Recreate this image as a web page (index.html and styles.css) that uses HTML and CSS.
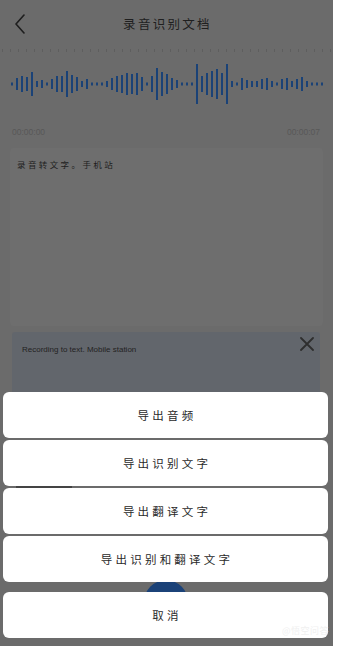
FILE: index.html
```html
<!DOCTYPE html>
<html lang="zh">
<head>
<meta charset="utf-8">
<title>录音识别文档</title>
<link rel="stylesheet" href="styles.css">
</head>
<body>
<div class="screen">
  <header class="topbar">
    <span class="back">
      <svg width="12" height="20" viewBox="0 0 12 20"><path d="M10 1 L2 10 L10 19" fill="none" stroke="#1e1e1e" stroke-width="1.6" stroke-linecap="round" stroke-linejoin="round"/></svg>
    </span>
    <h1 class="title">录音识别文档</h1>
    <span></span>
  </header>
  <div class="ruler"></div>
  <svg class="wave" width="333" height="44" viewBox="0 0 333 44">
    <g fill="#1a4277">
      <rect x="11" y="20.5" width="2" height="3"/>
      <rect x="16" y="16" width="2" height="12"/>
      <rect x="21" y="14" width="2" height="16"/>
      <rect x="26" y="15" width="2" height="14"/>
      <rect x="31" y="10" width="2" height="24"/>
      <rect x="36" y="19" width="2" height="6"/>
      <rect x="41" y="18" width="2" height="8"/>
      <rect x="46" y="20.5" width="2" height="3"/>
      <rect x="51" y="17" width="2" height="10"/>
      <rect x="56" y="14" width="2" height="16"/>
      <rect x="61" y="14" width="2" height="16"/>
      <rect x="66" y="9" width="2" height="26"/>
      <rect x="71" y="13" width="2" height="18"/>
      <rect x="76" y="15" width="2" height="14"/>
      <rect x="81" y="19" width="2" height="6"/>
      <rect x="86" y="17" width="2" height="10"/>
      <rect x="91" y="20.5" width="2" height="3"/>
      <rect x="96" y="20.5" width="2" height="3"/>
      <rect x="101" y="20.5" width="2" height="3"/>
      <rect x="106" y="19" width="2" height="6"/>
      <rect x="111" y="16" width="2" height="12"/>
      <rect x="116" y="14" width="2" height="16"/>
      <rect x="121" y="13" width="2" height="18"/>
      <rect x="126" y="11" width="2" height="22"/>
      <rect x="131" y="12" width="2" height="20"/>
      <rect x="136" y="11" width="2" height="22"/>
      <rect x="141" y="15" width="2" height="14"/>
      <rect x="146" y="20.5" width="2" height="3"/>
      <rect x="151" y="14" width="2" height="16"/>
      <rect x="156" y="6" width="2" height="32"/>
      <rect x="161" y="10" width="2" height="24"/>
      <rect x="166" y="12" width="2" height="20"/>
      <rect x="171" y="16" width="2" height="12"/>
      <rect x="176" y="18" width="2" height="8"/>
      <rect x="181" y="20.5" width="2" height="3"/>
      <rect x="186" y="20.5" width="2" height="3"/>
      <rect x="191" y="20.5" width="2" height="3"/>
      <rect x="196" y="2" width="2" height="40"/>
      <rect x="201" y="14" width="2" height="16"/>
      <rect x="206" y="11" width="2" height="22"/>
      <rect x="211" y="9" width="2" height="26"/>
      <rect x="216" y="7" width="2" height="30"/>
      <rect x="221" y="11" width="2" height="22"/>
      <rect x="226" y="2" width="2" height="40"/>
      <rect x="231" y="19" width="2" height="6"/>
      <rect x="236" y="20.5" width="2" height="3"/>
      <rect x="241" y="16" width="2" height="12"/>
      <rect x="246" y="18" width="2" height="8"/>
      <rect x="251" y="19" width="2" height="6"/>
      <rect x="256" y="19" width="2" height="6"/>
      <rect x="261" y="17" width="2" height="10"/>
      <rect x="266" y="16" width="2" height="12"/>
      <rect x="271" y="19" width="2" height="6"/>
      <rect x="276" y="20.5" width="2" height="3"/>
      <rect x="281" y="17" width="2" height="10"/>
      <rect x="286" y="16" width="2" height="12"/>
      <rect x="291" y="19" width="2" height="6"/>
      <rect x="296" y="17" width="2" height="10"/>
      <rect x="301" y="15" width="2" height="14"/>
      <rect x="306" y="19" width="2" height="6"/>
      <rect x="311" y="20.5" width="2" height="3"/>
      <rect x="316" y="20.5" width="2" height="3"/>
      <rect x="321" y="20.5" width="2" height="3"/>
    </g>
  </svg>
  <div class="times">
    <span>00:00:00</span>
    <span>00:00:07</span>
  </div>
  <section class="card">
    <p class="card-text">录音转文字。手机站</p>
  </section>
  <section class="trans">
    <p class="trans-text">Recording to text. Mobile station</p>
    <svg class="close" width="14" height="14" viewBox="0 0 14 14"><path d="M1 1 L13 13 M13 1 L1 13" stroke="#2e2e2e" stroke-width="1.8" stroke-linecap="round"/></svg>
  </section>

  <div class="tab-line"></div>
  <div class="record"></div>

  <div class="sheet">
    <div class="options">
      <button class="opt">导出音频</button>
      <button class="opt">导出识别文字</button>
      <button class="opt">导出翻译文字</button>
      <button class="opt">导出识别和翻译文字</button>
    </div>
    <button class="opt cancel">取消</button>
  </div>
  <span class="watermark">@悟空问答</span>
</div>
</body>
</html>
```

FILE: styles.css
```css
html, body {
  margin: 0;
  padding: 0;
  background: #ffffff;
}

.screen {
  position: relative;
  width: 333px;
  height: 646px;
  overflow: hidden;
  background: #6b6b6b;
  font-family: "Noto Sans CJK SC", "Noto Sans", sans-serif;
  display: flex;
  flex-direction: column;
}

.topbar {
  height: 46px;
  display: grid;
  grid-template-columns: 1fr auto 1fr;
  align-items: center;
}

.back {
  display: flex;
  align-items: center;
  padding-left: 14px;
  padding-top: 2px;
}

.title {
  margin: 0;
  font-size: 12.5px;
  font-weight: 400;
  letter-spacing: 2.3px;
  color: #1f1f1f;
  padding-left: 2px;
}

.ruler {
  margin-top: 3px;
  height: 3px;
  background: repeating-linear-gradient(90deg, #5e5e5e 0 1px, transparent 1px 8px);
  margin-left: 2px;
  margin-right: 2px;
}

.wave {
  display: block;
  margin-top: 10px;
}

.times {
  margin-top: 21px;
  padding: 0 13px 0 12px;
  display: flex;
  justify-content: space-between;
  font-family: "Liberation Sans", Arial, sans-serif;
  font-size: 8.5px;
  line-height: 10px;
  color: #585858;
}

.card {
  margin: 11px 10px 0;
  height: 178px;
  background: #6e6e6e;
  border-radius: 4px;
  padding: 10px 7px 0;
  box-sizing: border-box;
}

.card-text {
  margin: 0;
  font-size: 8.5px;
  letter-spacing: 2.4px;
  line-height: 12px;
  color: #1e1e1e;
}

.trans {
  position: relative;
  margin: 6px 13px 0 12px;
  height: 80px;
  background: #62666c;
  border-radius: 3px;
  padding: 12px 10px 0;
  box-sizing: border-box;
  display: flex;
  justify-content: space-between;
  align-items: flex-start;
}

.trans-text {
  margin: 0;
  font-family: "Liberation Sans", Arial, sans-serif;
  font-size: 8px;
  line-height: 12px;
  color: #222222;
}

.close {
  margin-top: -7px;
  margin-right: -4px;
}

.tab-line {
  position: absolute;
  left: 16px;
  top: 486px;
  width: 56px;
  height: 2px;
  background: #444;
}

.record {
  position: absolute;
  left: 144px;
  top: 580px;
  width: 44px;
  height: 44px;
  border-radius: 50%;
  background: #1b4278;
}

.sheet {
  position: absolute;
  left: 3px;
  right: 5px;
  bottom: 8px;
  display: flex;
  flex-direction: column;
  gap: 10px;
}

.options {
  display: flex;
  flex-direction: column;
  gap: 2px;
}

.opt {
  height: 46px;
  border: 0;
  border-radius: 6px;
  background: #ffffff;
  font-family: "Noto Sans CJK SC", "Noto Sans", sans-serif;
  font-size: 11.5px;
  letter-spacing: 3.2px;
  color: #2a2a2a;
  padding: 0 0 0 3px;
  margin: 0;
  text-align: center;
}

.watermark {
  position: absolute;
  right: 4px;
  bottom: 9px;
  font-size: 9px;
  color: #f0f0f0;
  letter-spacing: 0.5px;
}
```
